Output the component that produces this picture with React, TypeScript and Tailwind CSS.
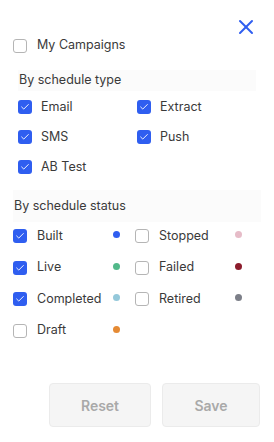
import { X, Check } from "lucide-react";

const TYPES = [
	["Email", "Extract"],
	["SMS", "Push"],
	["AB Test"],
];

const STATUSES: { label: string; checked: boolean; dot: string }[][] = [
	[
		{ label: "Built", checked: true, dot: "bg-[#2f5ef0]" },
		{ label: "Stopped", checked: false, dot: "bg-[#e6bcc8]" },
	],
	[
		{ label: "Live", checked: true, dot: "bg-[#52b98a]" },
		{ label: "Failed", checked: false, dot: "bg-[#8c1c2c]" },
	],
	[
		{ label: "Completed", checked: true, dot: "bg-[#94c8da]" },
		{ label: "Retired", checked: false, dot: "bg-[#7c7f88]" },
	],
	[{ label: "Draft", checked: false, dot: "bg-[#e58a34]" }],
];

function Box({ checked }: { checked: boolean }) {
	return checked ? (
		<span className="w-[14px] h-[14px] rounded-[3px] bg-[#2f5ef0] flex items-center justify-center shrink-0">
			<Check className="w-[10px] h-[10px] text-white" strokeWidth={2.2} />
		</span>
	) : (
		<span className="w-[14px] h-[14px] rounded-[3px] border border-[#b5b5b5] bg-white shrink-0" />
	);
}

export default function App() {
	return (
		<div
			className="w-[274px] h-[442px] bg-white text-[12.5px] text-[#3a3a3a] flex flex-col"
			style={{ fontFamily: "Inter, 'Noto Sans', sans-serif" }}
		>
			<div className="flex justify-end pt-[15px] pr-[16px] h-[39px]">
				<X className="w-[24px] h-[24px] text-[#2f5ef0]" strokeWidth={2} />
			</div>

			<div className="flex items-center gap-[10px] pl-[13px] -mt-[1px] h-[15px]">
				<Box checked={false} />
				<span>My Campaigns</span>
			</div>

			<div className="mx-[18px] mt-[17px] h-[21px] bg-[#fbfbfb] px-[1px] flex items-start pt-[1px]">
				By schedule type
			</div>

			<div className="pl-[18px] mt-[9px] flex flex-col gap-[16px]">
				{TYPES.map((row, i) => (
					<div key={i} className="flex h-[14px] items-center">
						{row.map((t) => (
							<div key={t} className="w-[119px] flex items-center gap-[9px]">
								<Box checked />
								<span>{t}</span>
							</div>
						))}
					</div>
				))}
			</div>

			<div className="mx-[13px] mt-[16px] h-[32px] bg-[#fbfbfb] px-[1px] flex items-center">
				By schedule status
			</div>

			<div className="pl-[13px] mt-[7px] flex flex-col gap-[17.5px]">
				{STATUSES.map((row, i) => (
					<div key={i} className="flex h-[14px] items-center">
						{row.map((s) => (
							<div key={s.label} className="w-[122px] flex items-center">
								<Box checked={s.checked} />
								<span className="ml-[10px] flex-1">{s.label}</span>
								<span className={`w-[7px] h-[7px] rounded-full ${s.dot} mr-[15px] mb-[3px]`} />
							</div>
						))}
					</div>
				))}
			</div>

			<div className="mt-auto mb-[15px] flex justify-end gap-[11px] pr-[14px]">
				<button
					type="button"
					className="w-[102px] h-[44px] rounded-[4px] bg-[#f5f5f5] border border-[#ebebeb] text-[#a9a9a9] font-semibold text-[14px]"
				>
					Reset
				</button>
				<button
					type="button"
					className="w-[98px] h-[44px] rounded-[4px] bg-[#f5f5f5] border border-[#ebebeb] text-[#a9a9a9] font-semibold text-[14px]"
				>
					Save
				</button>
			</div>
		</div>
	);
}
